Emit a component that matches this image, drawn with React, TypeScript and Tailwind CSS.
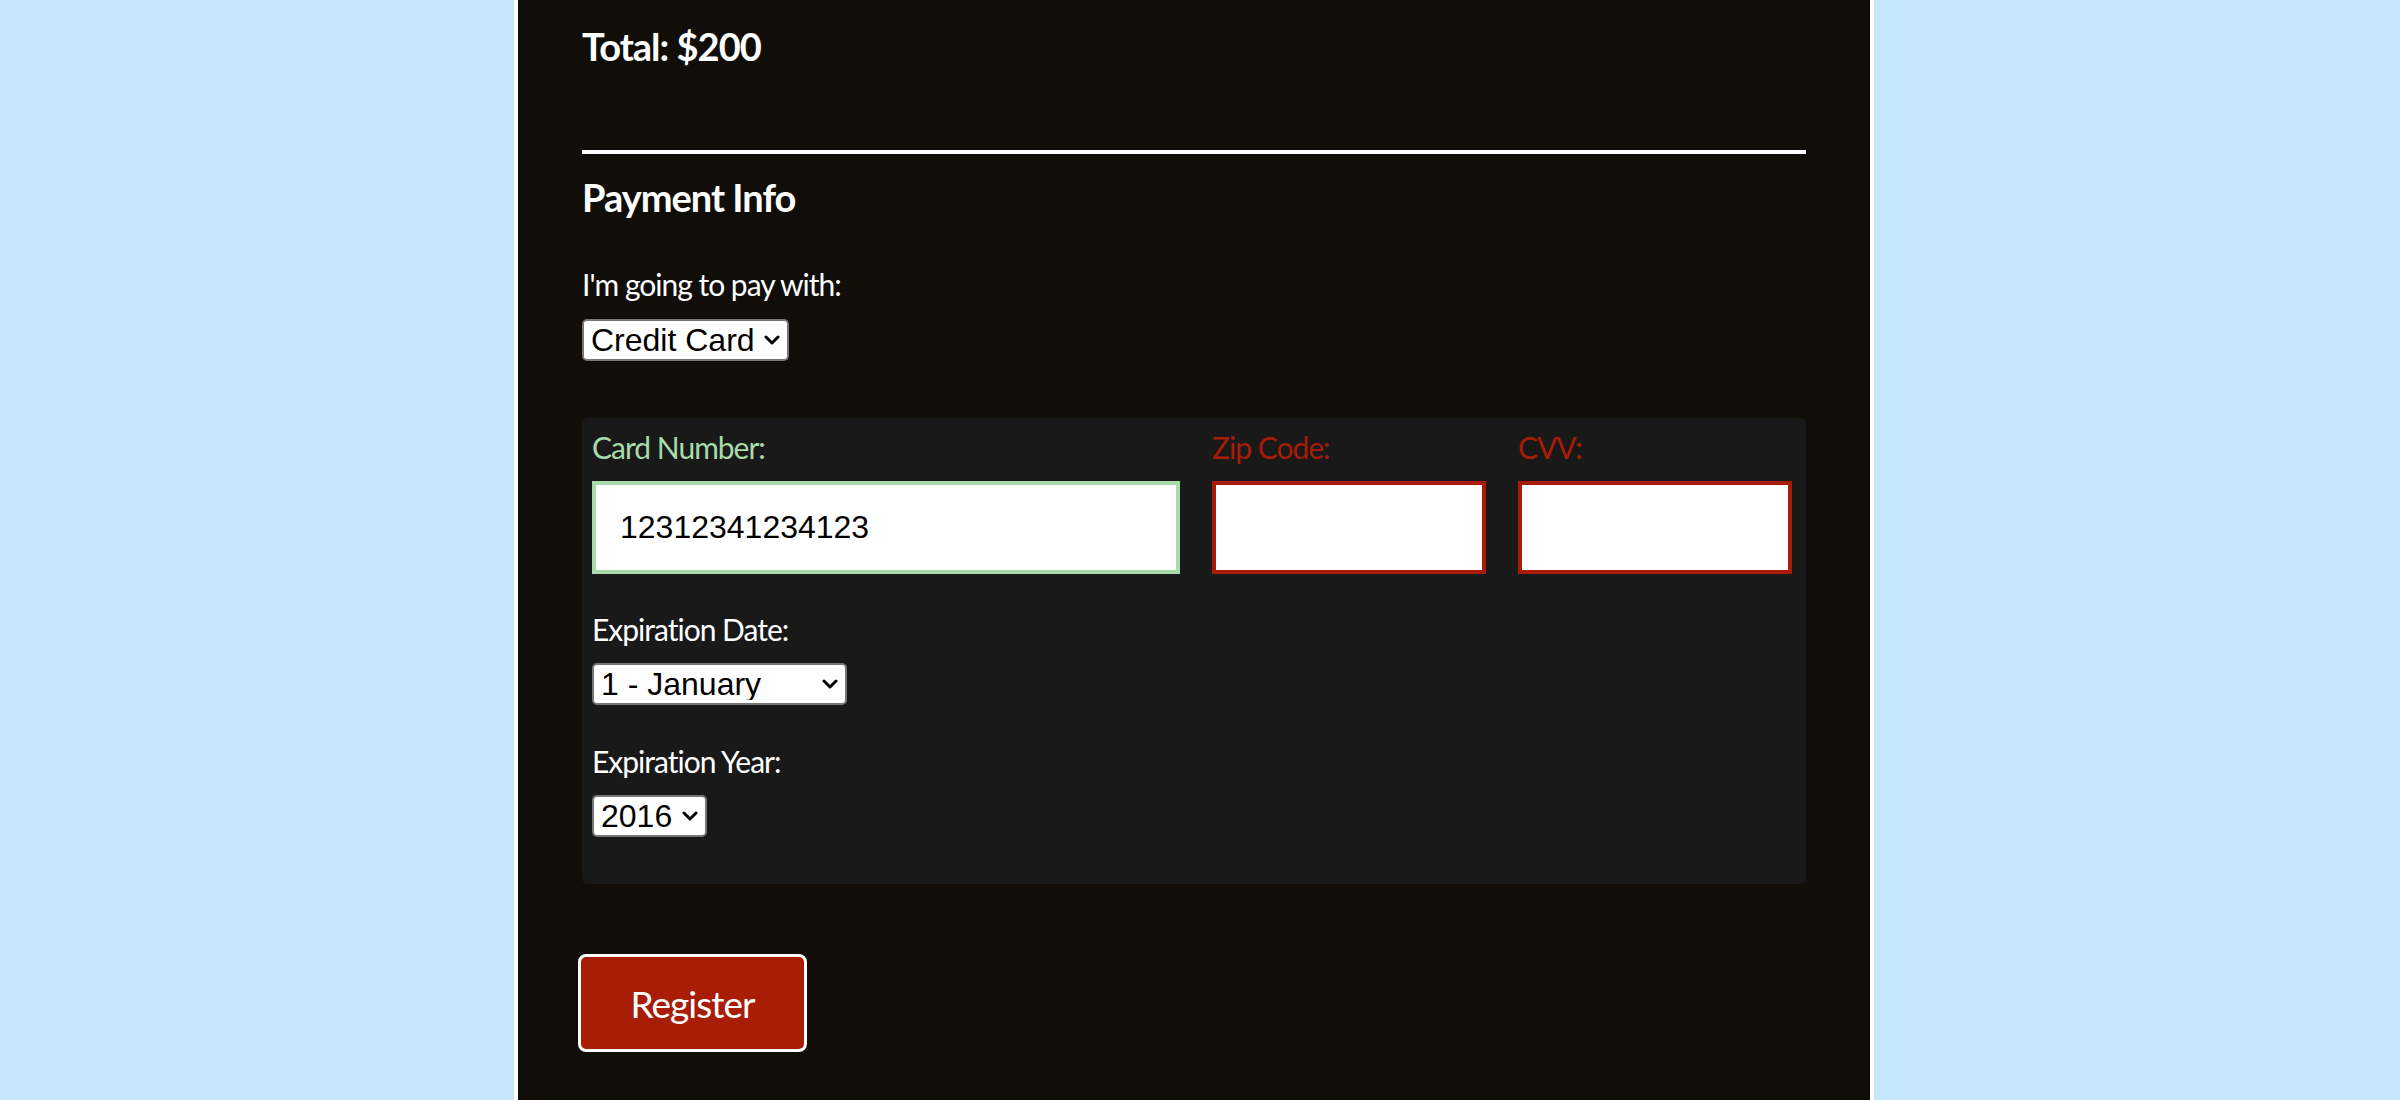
import React from "react";

const Chevron = () => (
  <svg
    width="16"
    height="10"
    viewBox="0 0 16 10"
    className="pointer-events-none absolute right-[9px] top-1/2 -translate-y-1/2"
  >
    <polyline
      points="2,2 8,8 14,2"
      fill="none"
      stroke="#000"
      strokeWidth="3"
      strokeLinecap="round"
      strokeLinejoin="round"
    />
  </svg>
);

interface SelectBoxProps {
  width: string;
  options: string[];
}

const SelectBox = ({ width, options }: SelectBoxProps) => {
  return (
    <div className={`relative ${width}`}>
      <select className="h-[42px] w-full appearance-none rounded-[5px] border-2 border-[#767676] bg-white pl-[7px] font-['Liberation_Sans',Arial,sans-serif] text-[32px] leading-none tracking-normal text-black outline-none">
        {options.map((o) => (
          <option key={o}>{o}</option>
        ))}
      </select>
      <Chevron />
    </div>
  );
};

interface FieldProps {
  label: string;
  tone: "ok" | "error";
  width: string;
  value?: string;
}

const Field = ({ label, tone, width, value }: FieldProps) => {
  const ok = tone === "ok";
  return (
    <div className={`flex flex-col ${width}`}>
      <label
        className={`text-[30px] leading-[40px] ${
          ok ? "text-[#a8dba9]" : "text-[#a81c07]"
        }`}
      >
        {label}
      </label>
      <input
        type="text"
        defaultValue={value}
        className={`mt-[14px] h-[93px] w-full border-4 bg-white pl-[24px] font-['Liberation_Sans',Arial,sans-serif] text-[32px] tracking-normal text-black outline-none ${
          ok ? "border-[#a8dba9]" : "border-[#a81c07]"
        }`}
      />
    </div>
  );
};

const App = () => {
  return (
    <div className="min-h-screen bg-[#c5e6fb] pr-[12px]">
      <div className="mx-auto min-h-screen w-[1360px] border-x-4 border-white bg-[#110e0a] px-[64px] pt-[22px] font-['Lato',sans-serif] tracking-[-1px] text-white">
        <h2 className="text-[38px] font-bold leading-[48px]">Total: $200</h2>

        <hr className="mt-[80px] h-1 border-0 bg-white" />

        <h3 className="mt-[19px] text-[38px] font-bold leading-[48px]">
          Payment Info
        </h3>

        <label className="mt-[43px] block text-[30px] leading-[40px]">
          I'm going to pay with:
        </label>
        <div className="mt-[15px]">
          <SelectBox width="w-[207px]" options={["Credit Card", "PayPal", "Bitcoin"]} />
        </div>

        <div className="mt-[57px] rounded-[6px] bg-[#191919] pb-[47px] pl-[10px] pr-[14px] pt-[9px]">
          <div className="flex gap-[32px]">
            <Field label="Card Number:" tone="ok" width="w-[588px]" value="12312341234123" />
            <Field label="Zip Code:" tone="error" width="w-[274px]" />
            <Field label="CVV:" tone="error" width="w-[274px]" />
          </div>

          <label className="mt-[35px] block text-[30px] leading-[40px]">
            Expiration Date:
          </label>
          <div className="mt-[14px]">
            <SelectBox
              width="w-[255px]"
              options={[
                "1 - January",
                "2 - February",
                "3 - March",
                "4 - April",
                "5 - May",
                "6 - June",
                "7 - July",
                "8 - August",
                "9 - September",
                "10 - October",
                "11 - November",
                "12 - December",
              ]}
            />
          </div>

          <label className="mt-[36px] block text-[30px] leading-[40px]">
            Expiration Year:
          </label>
          <div className="mt-[14px]">
            <SelectBox
              width="w-[115px]"
              options={["2016", "2017", "2018", "2019", "2020"]}
            />
          </div>
        </div>

        <button
          type="submit"
          className="-ml-[4px] mt-[70px] h-[98px] w-[229px] rounded-[8px] border-[3px] border-white bg-[#a81d06] text-[37px] leading-none text-white"
        >
          Register
        </button>
      </div>
    </div>
  );
};

export default App;
